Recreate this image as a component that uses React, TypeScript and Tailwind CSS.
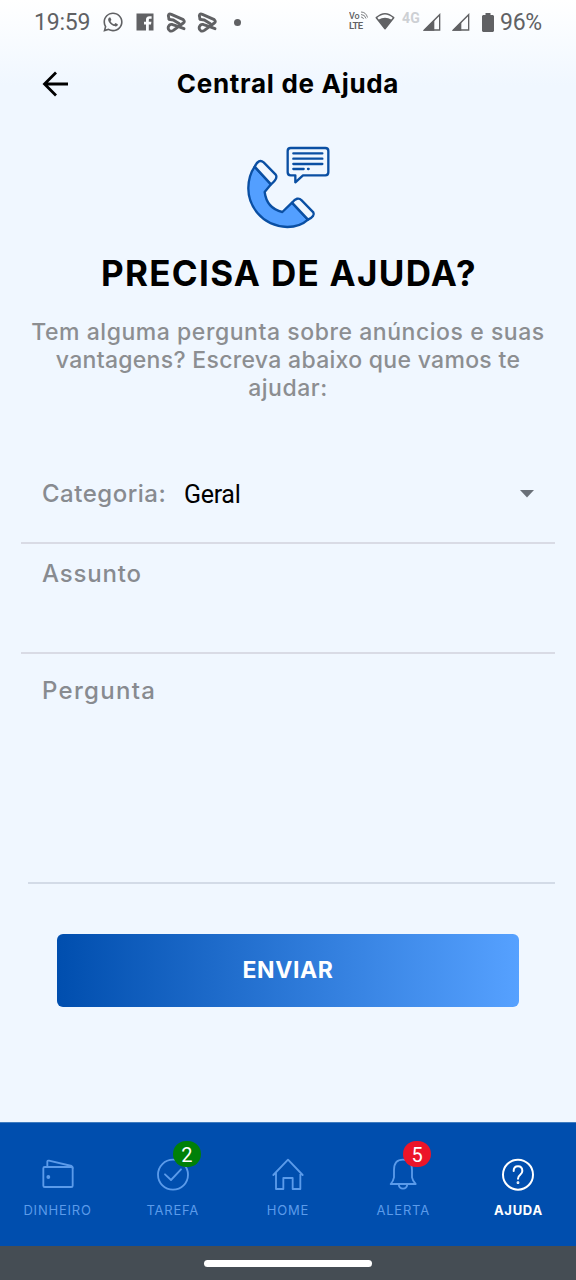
import type { ReactNode } from "react";
import { FaWhatsapp } from "react-icons/fa";

function AppGlyph() {
  return (
    <svg width="20" height="21" viewBox="0 0 60 63" fill="none" stroke="currentColor" strokeWidth="8.500" strokeLinejoin="round" strokeLinecap="round">
      <path d="M9 21L7 11q1-7 9-4l36 16q6 6 0 10L22 55q-6 4-11 1-6-4-4-11 2-9 11-8 4 1 36 13" />
      <path d="M9 22l13 2 18 11" />
    </svg>
  );
}

function Signal({ wide }: { wide?: boolean }) {
  return (
    <svg width="18" height="18" viewBox="0 0 54 54">
      <path d="M4 51L50 5v46z" fill="none" stroke="currentColor" strokeWidth="4" />
      <path d={wide ? "M1 53L34 20v33z" : "M1 53L28 26v27z"} fill="currentColor" />
    </svg>
  );
}

function StatusBar() {
  return (
    <div className="flex h-11 items-center pl-[34px] font-['Roboto',sans-serif] text-[#606164]">
      <span className="w-[68px] text-[23px] leading-none tracking-[-0.2px]">19:59</span>
      <FaWhatsapp className="size-[22px]" />
      <svg className="ml-3" width="18" height="18" viewBox="0 0 18 18">
        <path fill="currentColor" d="M0.5 0.5h17v17h-4.700v-6h2.200l.4-2.700h-2.600V7c0-.9.4-1.300 1.300-1.300h1.500V3.200h-2.200C11 3.200 10 4.500 10 6.600v2.200H8v2.700h2v6H.5z" />
      </svg>
      <div className="ml-3 flex gap-[11px]">
        <AppGlyph />
        <AppGlyph />
      </div>
      <span className="ml-[17px] size-[7px] rounded-full bg-[#606164]" />
      <svg className="ml-[108px] mb-1" width="19" height="20" viewBox="0 0 19 20" fill="currentColor">
        <text x="0" y="9" fontSize="9" fontWeight="500">Vo</text>
        <text x="0" y="19" fontSize="9.500" fontWeight="600" textLength="14">LTE</text>
        <path d="M12 4.500q4 0 5 4M12 2q5 0 6.500 5.500M12 7q2 0 2.500 2" fill="none" stroke="currentColor" strokeWidth=".8" />
      </svg>
      <svg className="ml-[7px] mb-0.5" width="20" height="18" viewBox="0 0 60 54">
        <path d="M4 17Q30-7 56 17L30 50z" fill="none" stroke="currentColor" strokeWidth="4.500" strokeLinejoin="round" />
        <path d="M10 23q20-11 40 0L30 51z" fill="currentColor" />
      </svg>
      <span className="mb-2 ml-[7px] w-[21px] text-[14px] font-bold leading-none tracking-[0.3px] text-[#cdd0d4]">4G</span>
      <Signal wide />
      <div className="ml-[11px]"><Signal /></div>
      <svg className="ml-3" width="12" height="19" viewBox="0 0 12 19">
        <path fill="currentColor" d="M3.500 0h5v2H11l1 1v15l-1 1H1l-1-1V3l1-1h2.500z" />
      </svg>
      <span className="ml-[6px] text-[23px] leading-none tracking-[-0.3px]">96%</span>
    </div>
  );
}

function PhoneArt() {
  return (
    <svg width="120" height="105" viewBox="0 0 360 315" fill="none" stroke="#0a4fa3" strokeWidth="7" strokeLinejoin="round" strokeLinecap="round">
      <path fill="#539fff" d="M74 95L123 148L104 171Q110 220 157 231L186 203L234 254Q210 276 172 276Q116 274 83 235Q54 201 55 158Q56 121 74 95z" />
      <path fill="#f0f7ff" d="M74 95Q86 70 101 82L137 119Q145 130 123 148z" />
      <path fill="#f0f7ff" d="M186 203Q202 183 215 196L250 232Q256 243 234 254z" />
      <path d="M182 39h104q9 0 9 9v64q0 9-9 9h-67l-23 21v-21h-14q-9 0-9-9V48q0-9 9-9z" />
      <path d="M190 55h87M190 71h87M190 87h87M190 102h31M234 102h2" />
    </svg>
  );
}

function NavIcon({ children }: { children: ReactNode }) {
  return (
    <svg width="34" height="34" viewBox="0 0 102 102" fill="none" stroke="currentColor" strokeWidth="5.500" strokeLinejoin="round" strokeLinecap="round">
      {children}
    </svg>
  );
}

const items = [
  {
    label: "DINHEIRO",
    icon: (
      <>
        <rect x="7" y="30" width="88" height="60" rx="4" />
        <path d="M19 29V13q1-3 5-2l68 16q3 1 3 6" />
        <circle cx="22" cy="60" r="3" fill="currentColor" />
      </>
    ),
  },
  {
    label: "TAREFA",
    badge: "2",
    badgeColor: "bg-[#008009]",
    icon: (
      <>
        <circle cx="51" cy="53" r="45" />
        <path d="M27 52l18 17 30-32" />
      </>
    ),
  },
  {
    label: "HOME",
    icon: <path d="M7 54L51 8l44 46M15 47v49h22V63h28v33h23V47" />,
  },
  {
    label: "ALERTA",
    badge: "5",
    badgeColor: "bg-[#ec1529]",
    icon: <path d="M14 81q8-9 10-20V39Q24 8 51 8t27 31v22q2 11 11 20zM38 82q2 13 13 13t13-13" />,
  },
  {
    label: "AJUDA",
    active: true,
    icon: (
      <>
        <circle cx="51" cy="53" r="45" strokeWidth="6" />
        <path d="M38 42q0-14 13-14t13 14c0 12-13 10-13 23" strokeWidth="6" />
        <circle cx="51" cy="77" r="1.500" fill="currentColor" />
      </>
    ),
  },
];

function BottomNav() {
  return (
    <nav className="grid h-[124px] grid-cols-5 border-t border-[#3f7cc0] bg-[#004eae]">
      {items.map((item) => (
        <div key={item.label} className={`flex flex-col items-center pt-[34px] ${item.active ? "text-white" : "text-[#5b9bea]"}`}>
          <div className="relative">
            <NavIcon>{item.icon}</NavIcon>
            {item.badge && (
              <span className={`absolute -top-4 left-[17px] flex h-[26px] w-7 items-center justify-center rounded-full pt-0.5 font-['Roboto',sans-serif] text-xl leading-none text-white ${item.badgeColor}`}>
                {item.badge}
              </span>
            )}
          </div>
          <span className={`mt-[11px] text-[13px] leading-4 ${item.active ? "font-bold tracking-[0.7px]" : "tracking-[0.8px]"}`}>{item.label}</span>
        </div>
      ))}
    </nav>
  );
}

export default function App() {
  return (
    <div className="flex h-[1280px] w-[576px] flex-col bg-[#f0f7ff] bg-[linear-gradient(to_bottom,#ffffff_0px,#f0f7ff_85px)] font-['Inter',sans-serif]">
      <StatusBar />
      <header className="grid h-20 grid-cols-[104px_1fr_104px] items-center">
        <svg className="ml-[42px]" width="28" height="28" viewBox="0 0 28 28" fill="none" stroke="#000" strokeWidth="2.800">
          <path d="M26 14H3M14 2.500L2.500 14 14 25.500" />
        </svg>
        <h1 className="whitespace-nowrap pb-0.5 text-center text-[26px] font-bold tracking-[0.7px] text-black">Central de Ajuda</h1>
      </header>

      <main className="flex flex-1 flex-col">
        <div className="mt-[11px] flex justify-center pl-1">
          <PhoneArt />
        </div>
        <h2 className="mt-[11px] whitespace-nowrap pl-0.5 text-center text-[35px] font-bold leading-[44px] tracking-[1.3px] text-black">PRECISA DE AJUDA?</h2>
        <p className="mt-[23px] whitespace-nowrap text-center text-[23px] font-medium leading-7 tracking-[0.55px] text-[#8c8e91]">
          Tem alguma pergunta sobre anúncios e suas
          <br />
          <span className="tracking-[0.3px]">vantagens? Escreva abaixo que vamos te</span>
          <br />
          ajudar:
        </p>

        <form className="mt-[43px] flex flex-col text-2xl font-medium tracking-[0.8px] text-[#888b90]">
          <div className="mx-[21px] flex h-[99px] items-center border-b-2 border-[#d9dbe5] px-[21px]">
            <label className="w-[142px] tracking-[0.5px]">Categoria:</label>
            <span className="pt-0.5 font-['Roboto',sans-serif] text-[25px] font-normal tracking-[-0.3px] text-black">Geral</span>
            <svg className="ml-auto" width="14" height="8" viewBox="0 0 14 8">
              <path d="M0 0h14L7 7.500z" fill="#6a7078" />
            </svg>
          </div>
          <div className="mx-[21px] h-[110px] border-b-2 border-[#d9dbe5] px-[21px] pt-[14px] leading-8">Assunto</div>
          <div className="ml-7 mr-[21px] h-[230px] border-b-2 border-[#d3dbe7] px-[14px] pt-[21px] leading-8 tracking-[1.3px]">Pergunta</div>
          <button type="button" className="mx-[57px] mt-[50px] h-[73px] rounded-md bg-linear-to-r/srgb from-[#004eae] to-[#56a1ff] text-[23px] font-bold tracking-[0.6px] text-white">
            ENVIAR
          </button>
        </form>
      </main>

      <BottomNav />
      <div className="flex h-[34px] items-center justify-center bg-[#454d54]">
        <div className="h-[7px] w-[168px] rounded-full bg-white" />
      </div>
    </div>
  );
}
